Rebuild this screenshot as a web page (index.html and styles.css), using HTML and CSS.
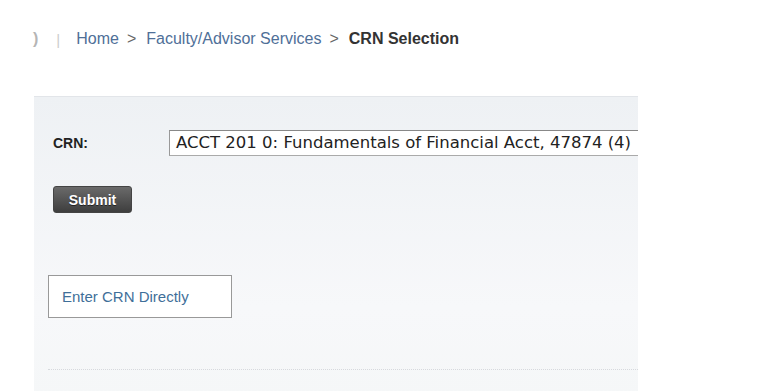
FILE: index.html
```html
<!DOCTYPE html>
<html lang="en">
<head>
    <meta charset="UTF-8">
    <title>CRN Selection</title>
    <link rel="stylesheet" href="styles.css">
</head>
<body>

    <div class="breadcrumb">
        <span class="tail">)</span>
        <span class="sep">|</span>
        <a href="#">Home</a>
        <span class="gt">&gt;</span>
        <a href="#">Faculty/Advisor Services</a>
        <span class="gt">&gt;</span>
        <strong>CRN Selection</strong>
    </div>

    <div class="panel">
        <form class="crn-form">
            <div class="crn-row">
                <label class="crn-label">CRN:</label>
                <div class="crn-select">ACCT 201 0: Fundamentals of Financial Acct, 47874 (4)</div>
            </div>
            <button type="button" class="submit-btn">Submit</button>
        </form>

        <a href="#" class="direct-link">Enter CRN Directly</a>

        <div class="dotted"></div>
    </div>

</body>
</html>
```

FILE: styles.css
```css
/* Page */
body {
    margin: 0;
    font-family: "Liberation Sans", Arial, sans-serif;
    background-color: #fff;
    color: #333;
    overflow: hidden;
}

/* Breadcrumb */
.breadcrumb {
    display: flex;
    align-items: center;
    height: 20px;
    margin-top: 29px;
    padding-left: 33px;
    font-size: 16px;
    color: #5a6f8a;
}

.breadcrumb .tail {
    color: #b5b5b5;
    font-weight: bold;
    margin-right: 18px;
}

.breadcrumb .sep {
    color: #ccc;
    font-size: 15px;
    margin-right: 16px;
}

.breadcrumb a {
    color: #4f6f98;
    text-decoration: none;
}

.breadcrumb .gt {
    color: #666;
    margin: 0 10px 0 8px;
}

.breadcrumb strong {
    color: #333;
}

/* Panel */
.panel {
    margin-top: 47px;
    margin-left: 34px;
    width: 604px;
    height: 300px;
    border-top: 1px solid #e2e5e9;
    background: linear-gradient(to bottom, #eef1f4, #f7f8fa 70%, #f5f7f8);
    overflow: hidden;
}

.crn-form {
    padding: 33px 0 0 19px;
}

.crn-row {
    display: flex;
    align-items: center;
}

.crn-label {
    flex: none;
    width: 116px;
    font-size: 14px;
    font-weight: bold;
    color: #222;
}

.crn-select {
    flex: none;
    width: 500px;
    height: 24px;
    line-height: 24px;
    padding-left: 6px;
    border: 1px solid #999;
    border-color: #888 #aaa #aaa #999;
    background-color: #fff;
    font-family: "DejaVu Sans", Verdana, sans-serif;
    font-size: 16.5px;
    color: #222;
    white-space: nowrap;
}

.submit-btn {
    display: block;
    margin-top: 30px;
    width: 79px;
    height: 27px;
    border: 1px solid #444;
    border-radius: 3px;
    background: linear-gradient(to bottom, #6a6a6a, #3e3e3e);
    color: #fff;
    font-family: "Liberation Sans", Arial, sans-serif;
    font-size: 14px;
    font-weight: bold;
    text-shadow: 0 1px 0 #222;
    cursor: pointer;
}

.direct-link {
    display: block;
    margin: 62px 0 0 14px;
    width: 169px;
    height: 41px;
    line-height: 41px;
    padding-left: 13px;
    border: 1px solid #999;
    background-color: #fff;
    color: #3f6f99;
    font-size: 15px;
    text-decoration: none;
}

.dotted {
    margin: 51px 0 0 14px;
    border-top: 1px dotted #d6d9dd;
}
```
